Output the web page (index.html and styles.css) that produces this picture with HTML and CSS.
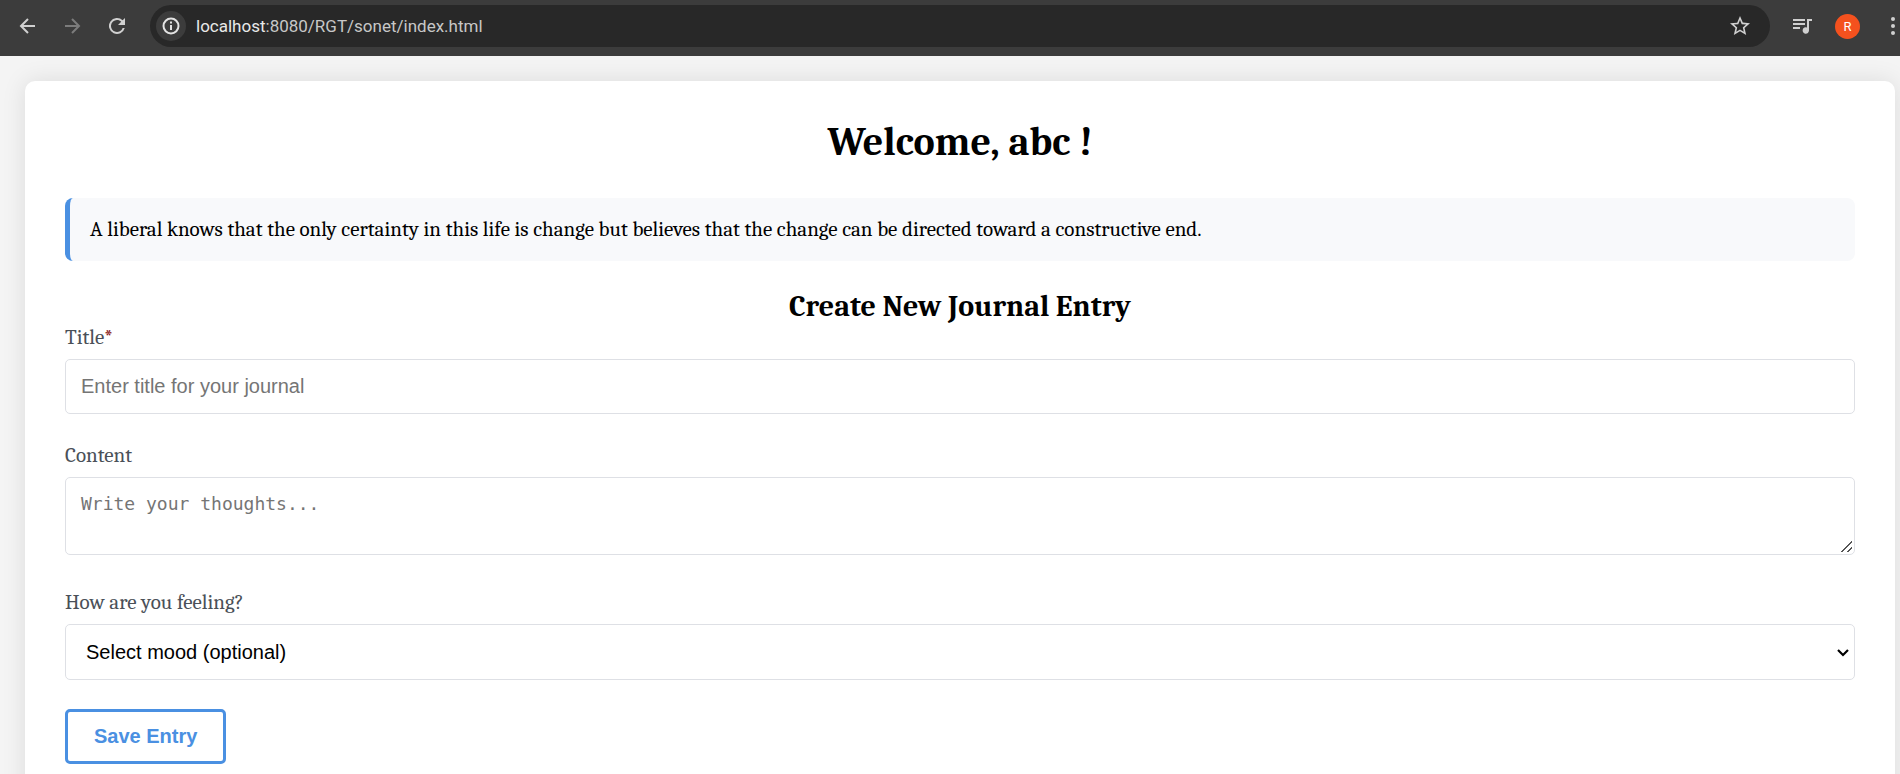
FILE: index.html
```html
<!DOCTYPE html>
<html lang="en">
<head>
<meta charset="utf-8">
<title>Journal</title>
<link rel="stylesheet" href="styles.css">
</head>
<body>
<header class="toolbar">
  <button class="tool" type="button" aria-label="Back"><svg width="24" height="24" viewBox="0 0 24 24" fill="none" stroke="#d0d0d0" stroke-width="2"><path d="M20 12H6M13 5l-7 7 7 7"/></svg></button>
  <button class="tool" type="button" aria-label="Forward"><svg width="24" height="24" viewBox="0 0 24 24" fill="none" stroke="#7c7c7c" stroke-width="2"><path d="M5 12h14M12 5l7 7-7 7"/></svg></button>
  <button class="tool" type="button" aria-label="Reload"><svg width="24" height="24" viewBox="0 0 24 24" fill="#d0d0d0"><path d="M17.650 6.350A8 8 0 1 0 19.730 14h-2.080A6 6 0 1 1 12 6c1.660 0 3.140.69 4.220 1.780L13 11h7V4z"/></svg></button>
  <div class="address">
    <button class="site-info" type="button" aria-label="Site information"><svg width="20" height="20" viewBox="0 0 20 20" fill="none" stroke="#e3e3e3" stroke-width="2"><circle cx="10" cy="10" r="7.500"/><path d="M10 9v5M10 5.500v2"/></svg></button>
    <span class="url"><span class="host">localhost</span>:8080/RGT/sonet/index.html</span>
    <button class="star" type="button" aria-label="Bookmark"><svg width="24" height="24" viewBox="0 0 24 24" fill="#d0d0d0"><path d="M22 9.240l-7.190-.62L12 2 9.190 8.630 2 9.240l5.460 4.730L5.820 21 12 17.270 18.180 21l-1.630-7.030zM12 15.400l-3.760 2.270 1-4.280-3.320-2.880 4.380-.38L12 6.100l1.710 4.040 4.380.38-3.320 2.880 1 4.280z"/></svg></button>
  </div>
  <button class="tool media" type="button" aria-label="Media"><svg width="22" height="18" viewBox="0 0 22 18" fill="#d0d0d0"><path d="M2 2h12v2H2zM2 6h12v2H2zM2 10h7v2H2zM16 2h5v2h-3v9.500a3.200 3.200 0 1 1-2-3z"/></svg></button>
  <button class="avatar" type="button">R</button>
  <button class="tool menu" type="button" aria-label="Menu"><svg width="6" height="20" viewBox="0 0 6 20" fill="#d0d0d0"><circle cx="3" cy="3" r="2"/><circle cx="3" cy="10" r="2"/><circle cx="3" cy="17" r="2"/></svg></button>
</header>
<main class="card">
  <h1 class="welcome">Welcome, abc !</h1>
  <p class="quote">A liberal knows that the only certainty in this life is change but believes that the change can be directed toward a constructive end.</p>
  <h2 class="heading">Create New Journal Entry</h2>
  <form class="form">
    <div class="field">
      <label for="title">Title<span class="required">*</span></label>
      <input class="control" id="title" type="text" placeholder="Enter title for your journal">
    </div>
    <div class="field field-content">
      <label for="content">Content</label>
      <textarea class="control content" id="content" rows="2" placeholder="Write your thoughts..."></textarea>
    </div>
    <div class="field">
      <label for="mood">How are you feeling?</label>
      <div class="select">
        <select class="control mood" id="mood"><option>Select mood (optional)</option></select>
        <svg class="chevron" width="12" height="8" viewBox="0 0 12 8" fill="none" stroke="#000" stroke-width="2.200"><path d="M1 1l5 5 5-5"/></svg>
      </div>
    </div>
    <button class="save" type="submit">Save Entry</button>
  </form>
</main>
</body>
</html>
```
FILE: styles.css
```css
* {
  box-sizing: border-box;
}

body {
  margin: 0;
  background: #f4f4f4;
  color: #000;
  font-family: Cambria, Caladea, "Liberation Serif", serif;
  font-size: 21px;
  line-height: 24px;
  overflow-x: hidden;
}

button {
  cursor: pointer;
}

.toolbar {
  display: flex;
  align-items: center;
  height: 56px;
  padding: 0 4px 4px 15px;
  background: #3c3c3c;
}

.tool,
.site-info,
.star,
.avatar {
  display: flex;
  align-items: center;
  justify-content: center;
  flex: none;
  padding: 0;
  border: 0;
  background: none;
}

.tool {
  width: 24px;
  height: 24px;
  margin-right: 21px;
}

.address {
  display: flex;
  align-items: center;
  flex: 1;
  height: 42px;
  padding: 0 18px 0 6px;
  border-radius: 21px;
  background: #282828;
}

.site-info {
  width: 30px;
  height: 30px;
  margin-right: 10px;
  border-radius: 50%;
  background: #3c3c3c;
}

.url {
  flex: 1;
  color: #c7c7c7;
  font-family: "Segoe UI", Roboto, sans-serif;
  font-size: 17px;
}

.host {
  color: #e8e8e8;
}

.media {
  margin: 0 21px 0 20px;
}

.avatar {
  width: 25px;
  height: 25px;
  margin-right: 30px;
  border-radius: 50%;
  background: #f4511e;
  color: #fff;
  font-family: Roboto, sans-serif;
  font-size: 13px;
}

.menu {
  width: 6px;
  margin: 0;
}

.card {
  margin: 25px 5px 25px 25px;
  padding: 37px 40px 40px;
  border-radius: 10px;
  background: #fff;
  box-shadow: 0 0 25px rgba(0, 0, 0, 0.1);
}

.welcome {
  margin: 0 0 32px;
  font-size: 40px;
  font-weight: 600;
  line-height: 48px;
  text-align: center;
}

.quote {
  margin: 0 0 29px;
  padding: 19px 20px 20px;
  border-left: 5px solid #4a90e2;
  border-radius: 8px;
  background: #f8f9fb;
}

.heading {
  margin: 0 0 1px;
  font-size: 30px;
  font-weight: 600;
  line-height: 34px;
  text-align: center;
}

.field {
  display: flex;
  flex-direction: column;
  gap: 10px;
  margin-bottom: 29px;
}

.field label {
  color: #4a5058;
}

.required {
  color: #8b1a1a;
}

.control {
  width: 100%;
  padding: 15px;
  border: 1px solid #dee0e5;
  border-radius: 5px;
  background: #fff;
  color: #000;
  font-family: "Liberation Sans", Arial, sans-serif;
  font-size: 20px;
}

.control::placeholder {
  color: #757575;
}

.content {
  height: 78px;
  font-family: Consolas, "DejaVu Sans Mono", monospace;
  font-size: 18px;
  resize: vertical;
}

.content::-webkit-resizer {
  background: linear-gradient(135deg, transparent 46%, #555 46%, #555 55%, transparent 55%, transparent 73%, #555 73%, #555 82%, transparent 82%) 2px 2px / 11px 11px no-repeat;
}

.field-content {
  margin-bottom: 35px;
}

.select {
  position: relative;
}

.mood {
  display: block;
  height: 56px;
  padding: 0 40px 0 20px;
  appearance: none;
}

.chevron {
  position: absolute;
  top: 25px;
  right: 6px;
  pointer-events: none;
}

.save {
  padding: 13px 26px;
  border: 3px solid #4a90e2;
  border-radius: 5px;
  background: #fff;
  color: #4a90e2;
  font-family: "Liberation Sans", Arial, sans-serif;
  font-size: 20px;
  font-weight: bold;
}
```
